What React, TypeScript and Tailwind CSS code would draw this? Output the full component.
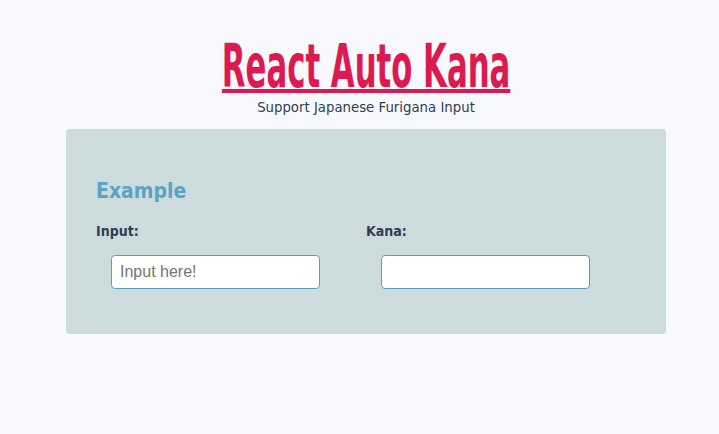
import React from 'react';

export default function App() {
    return (
        <div className="min-h-[434px] w-full bg-[#f8f8ff] pt-[36px]">
            <div className="ml-[66px] w-[600px]">
                {/* Header */}
                <header className="flex flex-col items-center">
                    <h1
                        className="h-[60px] text-[60px] leading-[60px] font-bold text-[#dc1a4f] underline decoration-[4px] underline-offset-[2px] scale-x-[0.57] whitespace-nowrap"
                        style={{ fontFamily: '"DejaVu Sans Condensed", "Liberation Sans", sans-serif' }}
                    >
                        React Auto Kana
                    </h1>
                    <p
                        className="mt-[4px] text-[13.3px] leading-[16px] text-[#2c3e50]"
                        style={{ fontFamily: '"DejaVu Sans", Verdana, sans-serif' }}
                    >
                        Support Japanese Furigana Input
                    </p>
                </header>

                {/* Example panel */}
                <section
                    className="mt-[13px] h-[205px] rounded-[4px] bg-[#ccdcdd] px-[30px] pt-[46px]"
                    style={{ fontFamily: '"DejaVu Sans Condensed", sans-serif' }}
                >
                    <h2 className="text-[21px] leading-[32px] font-bold text-[#5ba3c3]">Example</h2>
                    <div className="mt-[15px] grid grid-cols-2">
                        <div>
                            <label className="block text-[14px] leading-[18px] font-bold text-[#2c3e50]">Input:</label>
                            <input
                                className="ml-[15px] mt-[15px] h-[34px] w-[209px] rounded-[4px] border border-[#5b9fc0] bg-white px-[8px] text-[16px] text-[#333] placeholder:text-[#757575] outline-none"
                                style={{ fontFamily: '"Liberation Sans", Arial, sans-serif' }}
                                placeholder="Input here!"
                            />
                        </div>
                        <div>
                            <label className="block text-[14px] leading-[18px] font-bold text-[#2c3e50]">Kana:</label>
                            <input
                                className="ml-[15px] mt-[15px] h-[34px] w-[209px] rounded-[4px] border border-[#5b9fc0] bg-white px-[8px] text-[16px] text-[#333] outline-none"
                                style={{ fontFamily: '"Liberation Sans", Arial, sans-serif' }}
                            />
                        </div>
                    </div>
                </section>
            </div>
        </div>
    );
}
